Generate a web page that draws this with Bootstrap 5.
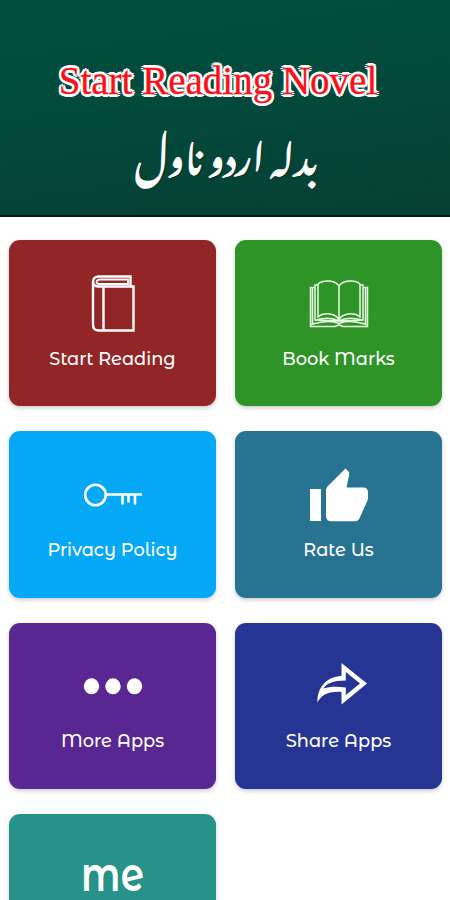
<!DOCTYPE html>
<html lang="en">
<head>
<meta charset="utf-8">
<meta name="viewport" content="width=device-width, initial-scale=1">
<title>Start Reading Novel</title>
<link href="https://cdn.jsdelivr.net/npm/bootstrap@5.3.0/dist/css/bootstrap.min.css" rel="stylesheet">
<style>
  body { background: #fff; font-family: "Montserrat Alternates", Montserrat, Inter, sans-serif; }
  .screen { height: 900px; }
  .hero { height: 217px; background: linear-gradient(172deg, #004f40 0%, #02493c 50%, #063f33 100%); border-bottom: 2px solid #05150f; }
  .hero-title { font: 39px/44px "Liberation Serif", serif; color: #fa1018; margin: 59px 14px 0 0; white-space: nowrap; letter-spacing: 0; -webkit-text-stroke: .3px #fa1018;
    text-shadow: 2.6px 0 #fff, -2.6px 0 #fff, 0 2.6px #fff, 0 -2.6px #fff, 2px 2px #fff, -2px 2px #fff, 2px -2px #fff, -2px -2px #fff, 0 0 2px #fff; }
  .hero-urdu { font: 39px/60px "Noto Nastaliq Urdu", "DejaVu Sans", sans-serif; margin: 17px 0 0 3px; white-space: nowrap; -webkit-text-stroke: .9px #fff; text-shadow: 1px 1px 1px #05261d; }
  .tiles { height: 683px; padding: 23px 8px 0 9px; display: grid; grid-template-columns: 207px 207px; grid-auto-rows: 166.4px; column-gap: 19px; row-gap: 25px; }
  .tile { border-radius: 11px; box-shadow: 0 2px 4px rgba(0,0,0,.2); }
  .tile-cut { height: 86px; border-radius: 11px 11px 0 0; }
  .tile svg { width: 64px; height: 64px; margin-top: 31px; }
  .tile-cut svg { height: 54px; overflow: visible; }
  .tile-label { font-size: 17.8px; line-height: 24px; font-weight: 500; margin-top: 11.5px; white-space: nowrap; }
  .c-read { background: #922526; } .c-mark { background: #2e9427; } .c-key { background: #04a8f5; }
  .c-rate { background: #287392; } .c-more { background: #592792; } .c-share { background: #263593; } .c-me { background: #27928a; }
  .me-mark { font: 600 48px "Montserrat Alternates", Inter, sans-serif; }
</style>
</head>
<body>
<div class="screen overflow-hidden">
<header class="hero d-flex flex-column align-items-center text-white">
  <h1 class="hero-title">Start Reading Novel</h1>
  <p class="hero-urdu" lang="ur" dir="rtl">بدلہ اردو ناول</p>
</header>
<main class="tiles text-white">
  <a class="tile c-read d-flex flex-column align-items-center text-white text-decoration-none">
    <svg viewBox="0 0 64 64" fill="none" stroke="#fff" stroke-width="2.4"><path d="M49.500 15.500V5.500H18Q12 5.500 12 11V54Q12 59.500 18 59.500H52.500V15.500H18Q12 15.500 12 10.500M22.500 15.500V59.500"/><path stroke-width="1.8" d="M47 8.500H18.500Q15.500 9 15.500 11T18.500 13H47Z"/></svg>
    <span class="tile-label">Start Reading</span>
  </a>
  <a class="tile c-mark d-flex flex-column align-items-center text-white text-decoration-none">
    <svg viewBox="0 0 64 64" fill="none" stroke="#eafbe6" stroke-width="1.5"><path d="M32 15C28 9 16 8.500 11 13V46C17 41 29 42 32 49C35 42 47 41 53 46V13C48 8.500 36 9 32 15V49M11 14H8V49L32 50L56 49V14H53M8 16.500H3.500V55.500H28Q32 53 36 55.500H60.500V16.500H56M5.500 17V53M58.500 17V53M4 53.500Q23 48 32 52.500Q41 48 60 53.500M9 49Q23 45 32 50Q41 45 55 49"/></svg>
    <span class="tile-label">Book Marks</span>
  </a>
  <a class="tile c-key d-flex flex-column align-items-center text-white text-decoration-none">
    <svg viewBox="0 0 64 64" fill="none" stroke="#fff" stroke-width="2.6"><circle cx="14.500" cy="33" r="10.300"/><path stroke-linecap="round" d="M25 32.500H60M41.500 33V41.500M47.500 33V39.500M54 33V41.500"/></svg>
    <span class="tile-label">Privacy Policy</span>
  </a>
  <a class="tile c-rate d-flex flex-column align-items-center text-white text-decoration-none">
    <svg viewBox="0 0 64 64" fill="#fff"><path d="M3 27H14V59H3ZM19 28Q19 26 20.500 24.500L38.500 6.500L41.500 9.500Q42.500 10.500 42.200 12.500L39.500 25.500H56Q61 25.500 61 30.500V36Q61 37.500 60.500 38.500L52.500 56.300Q51.200 59.200 48 59.200H24.500Q19 59.200 19 53.700Z"/></svg>
    <span class="tile-label">Rate Us</span>
  </a>
  <a class="tile c-more d-flex flex-column align-items-center text-white text-decoration-none">
    <svg viewBox="0 0 64 64" fill="#fff"><ellipse cx="10.500" cy="32.300" rx="7.700" ry="8"/><ellipse cx="32" cy="32.300" rx="7.700" ry="8"/><ellipse cx="53.500" cy="32.300" rx="7.700" ry="8"/></svg>
    <span class="tile-label">More Apps</span>
  </a>
  <a class="tile c-share d-flex flex-column align-items-center text-white text-decoration-none">
    <svg viewBox="0 0 64 64" fill="#fff" fill-rule="evenodd"><path d="M34.500 9L60 29.500L34.500 50.500V38C22 37 14 41 10.500 48.500C10 33 20 22.500 34.500 22ZM38.800 18V26.500C26 26.500 19 29.500 16.500 34.500C23 32.500 30 32.500 38.800 33.500V41L53 29.500Z"/></svg>
    <span class="tile-label">Share Apps</span>
  </a>
  <a class="tile tile-cut c-me d-flex flex-column align-items-center text-white text-decoration-none">
    <svg viewBox="0 0 64 54" fill="#fff"><text class="me-mark" x="0" y="46" textLength="63" lengthAdjust="spacingAndGlyphs">me</text></svg>
  </a>
</main>
</div>
<script src="https://cdn.jsdelivr.net/npm/bootstrap@5.3.0/dist/js/bootstrap.bundle.min.js"></script>
</body>
</html>
